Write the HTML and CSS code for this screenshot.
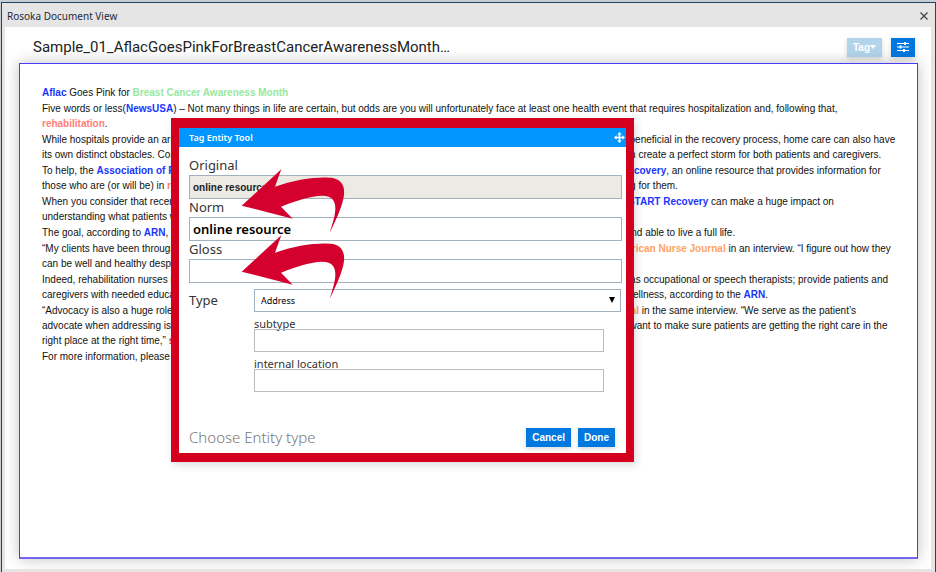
FILE: index.html
```
<!DOCTYPE html>
<html lang="en">
<head>
    <meta charset="UTF-8">
    <meta name="viewport" content="width=device-width, initial-scale=1.0">
    <title>Rosoka Document View</title>
    <link rel="stylesheet" href="styles.css">
</head>
<body>

    <div class="window">
        <div class="titlebar">
            <span>Rosoka Document View</span>
            <button class="close" aria-label="Close">
                <svg width="8" height="8" viewBox="0 0 8 8"><path d="M0.5 0.5 L7.5 7.5 M7.5 0.5 L0.5 7.5" stroke="#444" stroke-width="1.3"/></svg>
            </button>
        </div>

        <main class="content">
            <header class="doc-header">
                <h1>Sample_01_AflacGoesPinkForBreastCancerAwarenessMonth…</h1>
                <div class="tools">
                    <button class="btn tag" disabled>Tag<svg width="6" height="4" viewBox="0 0 6 4"><path d="M0 0 H6 L3 4 Z" fill="#fff"/></svg></button>
                    <button class="btn settings" aria-label="Settings">
                        <svg width="12" height="10" viewBox="0 0 12 10" fill="none" stroke="#fff">
                            <path d="M0 1.5 H12 M0 5 H12 M0 8.5 H12" stroke-width="1.2"/>
                            <path d="M8 0 V3 M3.5 3.5 V6.5 M7 7 V10" stroke-width="2"/>
                        </svg>
                    </button>
                </div>
            </header>

            <article class="document">
                <p><b class="org">Aflac</b> Goes Pink for <b class="event">Breast Cancer Awareness Month</b></p>
                <p>Five words or less(<b class="org">NewsUSA</b>) – Not many things in life are certain, but odds are you will unfortunately face at least one health event that requires hospitalization and, following that,<br>
                <b class="care">rehabilitation</b>.</p>
                <p>While hospitals provide an array of useful treatments and experts for recovering patients who have had surgery which can be greatly beneficial in the recovery process, home care can also have<br>
                its own distinct obstacles. Continuing medications and restricted movement and constant chronic fatigue after a hospital stay often can create a perfect storm for both patients and caregivers.</p>
                <p>To help, the <b class="org">Association of Rehabilitation Nurses</b> (<b class="org">ARN</b>) recently designed the new national campaign, better known as <b class="org">Restart Recovery</b>, an online resource that provides information for<br>
                those who are (or will be) in <b class="care">rehabilitation</b> and care, as well as all the close relatives at home who may be often responsible for caring for them.</p>
                <p>When you consider that recently national research suggest that millions of people require more support after leaving the hospital, <b class="org">RESTART Recovery</b> can make a huge impact on<br>
                understanding what patients will need and how they can best be supported.</p>
                <p>The goal, according to <b class="org">ARN</b>, is to help these survivors get back to their community feeling stronger, independent, quite independent and able to live a full life.</p>
                <p>“My clients have been through quite trauma,” as explained one certified nurse Deborah Williams, a senior nurse in Ohio, told the <b class="source">American Nurse Journal</b> in an interview. “I figure out how they<br>
                can be well and healthy despite an illness or a disability.”</p>
                <p>Indeed, rehabilitation nurses coordinate the complete treatment with various professionals and others on the team, including working as occupational or speech therapists; provide patients and<br>
                caregivers with needed education and all the guidance, skills and helpful information along the way required to help promote overall wellness, according to the <b class="org">ARN</b>.</p>
                <p>“Advocacy is also a huge role for rehab nurses here,” she explained the Susan Johnson, who spoke with the <b class="source">American Nurse Journal</b> in the same interview. “We serve as the patient’s<br>
                advocate when addressing issues with their physicians companies and close relatives members during recovery because we always want to make sure patients are getting the right care in the<br>
                right place at the right time,” <b class="said">said</b> Johnson.</p>
                <p>For more information, please visit the website.</p>
            </article>
        </main>
    </div>

    <form class="dialog">
        <div class="dialog-title">
            <span>Tag Entity Tool</span>
            <svg width="11" height="11" viewBox="0 0 11 11" fill="#fff">
                <path d="M5.5 0 L7.8 2.6 H6.3 V4.7 H8.4 V3.2 L11 5.5 L8.4 7.8 V6.3 H6.3 V8.4 H7.8 L5.5 11 L3.2 8.4 H4.7 V6.3 H2.6 V7.8 L0 5.5 L2.6 3.2 V4.7 H4.7 V2.6 H3.2 Z"/>
            </svg>
        </div>
        <div class="dialog-body">
            <label for="original">Original</label>
            <input type="text" id="original" class="original" value="online resource" readonly>
            <label for="norm">Norm</label>
            <input type="text" id="norm" class="norm" value="online resource">
            <label for="gloss">Gloss</label>
            <input type="text" id="gloss">

            <div class="type-row">
                <label for="type">Type</label>
                <div class="type-fields">
                    <div class="select-wrap">
                        <select id="type">
                            <option>Address</option>
                        </select>
                        <svg width="6" height="6" viewBox="0 0 6 6"><path d="M0 0 H6 L3 6 Z"/></svg>
                    </div>
                    <label for="subtype" class="small">subtype</label>
                    <input type="text" id="subtype" class="sub">
                    <label for="location" class="small">internal location</label>
                    <input type="text" id="location" class="sub">
                </div>
            </div>

            <div class="dialog-footer">
                <span class="hint">Choose Entity type</span>
                <button type="button" class="btn">Cancel</button>
                <button type="button" class="btn">Done</button>
            </div>
        </div>

        <svg class="arrow arrow-norm" viewBox="0 0 104 66"><path d="M0.7 36.7 L40.3 0.3 L34 17.7 C54 10 80 7 92 9 C108 13 104 29 97 46 Q93 55 88.7 63.7 C93 50 97 38 92 31 C86 22 62 29 40 37.7 L51.7 49.7 Z"/></svg>
        <svg class="arrow arrow-gloss" viewBox="0 0 104 66"><path d="M0.7 36.7 L40.3 0.3 L34 17.7 C54 10 80 7 92 9 C108 13 104 29 97 46 Q93 55 88.7 63.7 C93 50 97 38 92 31 C86 22 62 29 40 37.7 L51.7 49.7 Z"/></svg>
    </form>

</body>
</html>
```
FILE: styles.css
```
* {
    box-sizing: border-box;
}

body {
    margin: 0;
    padding: 2px 0 0 1px;
    height: 100vh;
    background: #c9ced4;
    font-family: "Liberation Sans", Arial, sans-serif;
    font-size: 10px;
    color: #111;
    overflow: hidden;
}

.window {
    display: flex;
    flex-direction: column;
    height: 100%;
    padding: 0 4px 3px 3px;
    background: #e5e5e5;
    border: 1px solid #1f4468;
    border-bottom: none;
}

.titlebar {
    display: flex;
    align-items: center;
    justify-content: space-between;
    height: 24px;
    padding: 2px 3px 0 2px;
    font-family: "Noto Sans", "Open Sans", sans-serif;
    color: #1c2b3a;
}

.close {
    display: flex;
    padding: 0;
    border: none;
    background: none;
}

.content {
    display: flex;
    flex: 1;
    flex-direction: column;
    padding: 0 13px 10px 14px;
    background: #fff;
    overflow: hidden;
}

.doc-header {
    display: flex;
    align-items: center;
    justify-content: space-between;
    height: 36px;
    padding: 4px 3px 0 14px;
}

h1 {
    margin: 0;
    font-family: Roboto, Arial, sans-serif;
    font-size: 15px;
    font-weight: normal;
    color: #222;
}

.tools {
    display: flex;
    gap: 9px;
}

.btn {
    display: flex;
    align-items: center;
    justify-content: center;
    height: 19px;
    padding: 0 6px;
    border: none;
    background: #0078e0;
    color: #fff;
    font-family: inherit;
    font-size: 10px;
    font-weight: bold;
    box-shadow: 0 2px 5px rgba(0, 0, 0, 0.15);
}

.tag {
    background: #b3d5ec;
}

.document {
    flex: 1;
    padding: 21px 22px;
    background: #fff;
    border: 1px solid #4a3cf5;
    border-bottom: 2px solid #7466f0;
    box-shadow: 0 0 14px rgba(0, 0, 0, 0.25);
    line-height: 15px;
    white-space: nowrap;
    overflow: hidden;
}

.document p {
    margin: 0 0 1px;
}

/* entity colours */
.org {
    color: #1a35ff;
}

.event {
    color: #98e8a0;
}

.care {
    color: #ff7f78;
}

.source {
    color: #ffa263;
}

.said {
    color: #f0304a;
}

.dialog {
    position: absolute;
    top: 118px;
    left: 171px;
    width: 463px;
    background: #fff;
    border: solid #d2001e;
    border-width: 10px 8px 9px;
    box-shadow: 2px 3px 8px rgba(0, 0, 0, 0.15);
    font-family: "Noto Sans", "Open Sans", sans-serif;
    font-size: 13px;
    color: #333;
}

.dialog-title {
    display: flex;
    align-items: center;
    justify-content: space-between;
    height: 19px;
    padding: 0 1px 0 10px;
    background: #0095ff;
    color: #fff;
    font-size: 9px;
    font-weight: 600;
}

.dialog-body {
    display: flex;
    flex-direction: column;
    padding: 10px 4px 6px 10px;
}

.dialog-body label {
    line-height: 18px;
}

.dialog-body > label {
    height: 18px;
    line-height: 16px;
}

input, select {
    width: 100%;
    height: 24px;
    margin: 0;
    padding: 0 3px;
    border: 1px solid #a3b1bf;
    border-radius: 0;
    background: transparent;
    font-family: inherit;
    color: #000;
}

.original {
    background: #ebebe4;
    color: #222;
    font-family: "Liberation Sans", Arial, sans-serif;
    font-size: 10px;
    font-weight: bold;
}

.norm {
    font-size: 13px;
    font-weight: 600;
}

.type-row {
    display: flex;
    margin-top: 6px;
}

.type-row > label {
    width: 65px;
    line-height: 23px;
}

.type-fields {
    display: flex;
    flex: 1;
    flex-direction: column;
}

.select-wrap {
    position: relative;
    display: flex;
    padding-right: 1px;
}

select {
    height: 23px;
    padding: 0 6px;
    appearance: none;
    font-size: 9px;
}

.select-wrap svg {
    position: absolute;
    top: 8px;
    right: 7px;
    pointer-events: none;
}

.dialog-body .small {
    height: 17px;
    padding-top: 6px;
    font-size: 11px;
    line-height: 12px;
}

.sub {
    width: auto;
    height: 23px;
    margin-right: 18px;
    border-color: #bbb;
}

.dialog-footer {
    display: flex;
    align-items: center;
    gap: 7px;
    margin-top: 36px;
    padding-right: 7px;
}

.dialog-footer .btn {
    font-family: "Liberation Sans", Arial, sans-serif;
}

.hint {
    flex: 1;
    color: #777;
    font-size: 15px;
    font-weight: 300;
    line-height: 19px;
}

/* pointers over the norm and gloss fields */
.arrow {
    position: absolute;
    left: 62px;
    width: 104px;
    height: 66px;
    fill: #d4002d;
    pointer-events: none;
}

.arrow-norm {
    top: 41px;
}

.arrow-gloss {
    top: 107px;
}
```
